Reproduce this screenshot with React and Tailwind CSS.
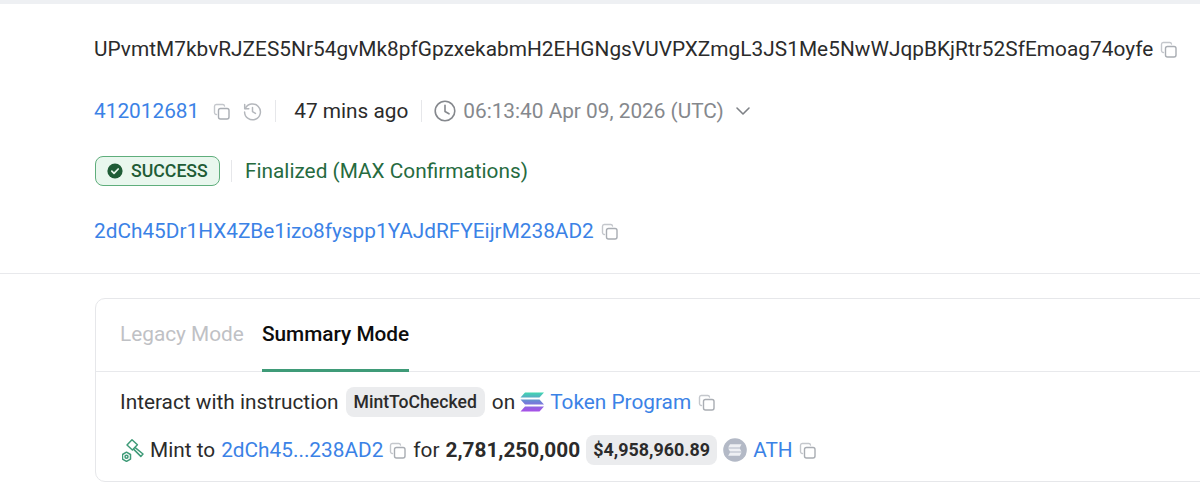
import { useId } from 'react'

const link = 'text-[#3b82e6]'

function CopyIcon({ className = 'ml-[7px]' }) {
  return (
    <svg width="17" height="17" viewBox="0 0 17 17" fill="none" className={`shrink-0 ${className}`}>
      <path d="M3.5 11.5H3a1.8 1.8 0 0 1-1.5-1.7V3.2A1.8 1.8 0 0 1 3.2 1.5h6.6a1.8 1.8 0 0 1 1.7 1.5" stroke="#c4c7cc" strokeWidth="1.4" strokeLinecap="round" />
      <rect x="5.5" y="5.5" width="10.5" height="10.5" rx="2" stroke="#a9adb3" strokeWidth="1.4" />
    </svg>
  )
}

function HistoryIcon() {
  return (
    <svg width="19" height="19" viewBox="0 0 18 18" fill="none" stroke="#b4b7bc" strokeWidth="1.4" strokeLinecap="round" strokeLinejoin="round" className="ml-[13px] shrink-0">
      <path d="M2.2 6.2A7.5 7.5 0 1 1 1.5 9.4" />
      <path d="M1.6 2.4v3.9h3.9" />
      <path d="M9 5.2v4l2.8 1.6" />
    </svg>
  )
}

function ClockIcon() {
  return (
    <svg width="22" height="22" viewBox="0 0 22 22" fill="none" stroke="#85888d" strokeWidth="1.6" strokeLinecap="round" strokeLinejoin="round" className="shrink-0">
      <circle cx="11" cy="11" r="9.8" />
      <path d="M11 5.2v6.3l4 2.3" />
    </svg>
  )
}

function CheckBadge() {
  return (
    <svg width="16" height="16" viewBox="0 0 16 16" className="shrink-0">
      <circle cx="8" cy="8" r="7.6" fill="#1f5c36" />
      <path d="M4.8 8.2l2.2 2.2 4.2-4.4" fill="none" stroke="#e8f6ec" strokeWidth="1.7" strokeLinecap="round" strokeLinejoin="round" />
    </svg>
  )
}

function MintIcon() {
  return (
    <svg width="22" height="24" viewBox="0 0 22 24" fill="none" stroke="#3f9b78" strokeWidth="1.5" strokeLinejoin="round" strokeLinecap="round" className="shrink-0">
      <path d="M5 7l5-5.2 5.4 5-5 5.2z" />
      <path d="M13.2 9.6l7.8 6.4-2.2 2.4-7-7" />
      <path d="M4.5 14.2l4 2.3v4.6l-4 2.3-4-2.3v-4.6z" />
      <circle cx="4.5" cy="18.8" r="1.5" />
    </svg>
  )
}

function SolanaIcon() {
  const id = useId()
  return (
    <svg width="24" height="20" viewBox="0 0 24 20" className="shrink-0">
      <defs>
        <linearGradient id={id} x1="0" y1="0" x2="0" y2="1">
          <stop offset="0" stopColor="#3fd8b0" />
          <stop offset="0.5" stopColor="#6f82d8" />
          <stop offset="1" stopColor="#a94fe8" />
        </linearGradient>
      </defs>
      <path fill={`url(#${id})`} d="M5 0.5H24l-4.5 5H0.5zM0.5 7.5h19L24 12.5H5zM5 14.5H24l-4.5 5H0.5z" />
    </svg>
  )
}

function AthIcon() {
  return (
    <svg width="24" height="24" viewBox="0 0 24 24" className="shrink-0">
      <circle cx="12" cy="12" r="11.8" fill="#b3b9c6" />
      <path fill="#eef0f4" d="M7 6.2h11.5L16.8 9.6H5.2zM5.2 10.4h11.6l1.7 3.2H7zM7 14.4h11.5l-1.7 3.4H5.2z" />
    </svg>
  )
}

function Divider({ className = '' }) {
  return <span className={`w-px h-[22px] bg-[#e6e7ea] shrink-0 ${className}`} />
}

export default function App() {
  return (
    <div className="w-[1200px] h-[492px] overflow-hidden bg-white text-[20.8px] leading-[24px] text-[#2b2b2b] font-['Roboto',sans-serif]">
      <div className="h-[4px] bg-[#eef0f3]" />

      <div className="pl-[94px] pt-[33px] pb-[30px] border-b border-[#e8e9ec] h-[270px]">
        <div className="flex items-center h-[24px]">
          <span className="tracking-[0.035px]">UPvmtM7kbvRJZES5Nr54gvMk8pfGpzxekabmH2EHGNgsVUVPXZmgL3JS1Me5NwWJqpBKjRtr52SfEmoag74oyfe</span>
          <CopyIcon />
        </div>

        <div className="flex items-center h-[24px] mt-[38px]">
          <span className={link}>412012681</span>
          <CopyIcon className="ml-[14px]" />
          <HistoryIcon />
          <Divider className="ml-[13px]" />
          <span className="ml-[18px]">47 mins ago</span>
          <Divider className="ml-[13px]" />
          <span className="ml-[12px]"><ClockIcon /></span>
          <span className="ml-[7px] text-[#85888d]">06:13:40 Apr 09, 2026 (UTC)</span>
          <svg width="16" height="10" viewBox="0 0 16 10" fill="none" stroke="#7e8186" strokeWidth="1.6" strokeLinecap="round" strokeLinejoin="round" className="ml-[11px]">
            <path d="M2 2l6 6 6-6" />
          </svg>
        </div>

        <div className="flex items-center h-[30px] mt-[33px]">
          <span className="ml-px flex items-center h-[30px] w-[125px] pl-[11px] gap-[8px] rounded-[8px] border border-[#5fae7c] bg-[#e9f7ee] text-[#1f5c36] text-[17.7px] font-medium">
            <CheckBadge />
            SUCCESS
          </span>
          <Divider className="ml-[11px]" />
          <span className="ml-[13px] text-[#266b3f]">Finalized (MAX Confirmations)</span>
        </div>

        <div className="flex items-center h-[24px] mt-[33px]">
          <span className={link}>2dCh45Dr1HX4ZBe1izo8fyspp1YAJdRFYEijrM238AD2</span>
          <CopyIcon />
        </div>
      </div>

      <div className="mt-[24px] ml-[95px] w-[1130px] h-[184px] rounded-[10px] border border-[#e6e7ea]">
        <div className="flex h-[73px] pl-[24px] border-b border-[#e8e9ec]">
          <span className="pt-[23px] text-[#bfc1c5]">Legacy Mode</span>
          <span className="ml-[18px] pt-[23px] font-medium text-[#0d0d0d] relative">
            Summary Mode
            <span className="absolute left-0 right-0 bottom-[-1px] h-[3px] bg-[#3f9b78]" />
          </span>
        </div>

        <div className="pl-[24px]">
          <div className="flex items-center h-[30px] mt-[15px]">
            <span>Interact with instruction</span>
            <span className="ml-[7px] flex items-center h-[30px] px-[8px] rounded-[8px] bg-[#ebecee] text-[17.6px] font-medium">MintToChecked</span>
            <span className="ml-[7px]">on</span>
            <span className="ml-[5px]"><SolanaIcon /></span>
            <span className={`ml-[6px] ${link}`}>Token Program</span>
            <CopyIcon className="ml-[7px]" />
          </div>

          <div className="flex items-center h-[30px] mt-[18px]">
            <span className="ml-[2px]"><MintIcon /></span>
            <span className="ml-[6px]">Mint to</span>
            <span className={`ml-[6px] ${link}`}>2dCh45...238AD2</span>
            <CopyIcon className="ml-[6px]" />
            <span className="ml-[7px]">for</span>
            <span className="ml-[6px] font-bold">2,781,250,000</span>
            <span className="ml-[6px] flex items-center h-[30px] w-[131px] justify-center rounded-[8px] bg-[#ebecee] text-[17.9px] font-bold">$4,958,960.89</span>
            <span className="ml-[6px]"><AthIcon /></span>
            <span className={`ml-[6px] ${link}`}>ATH</span>
            <CopyIcon className="ml-[6px]" />
          </div>
        </div>
      </div>
    </div>
  )
}
